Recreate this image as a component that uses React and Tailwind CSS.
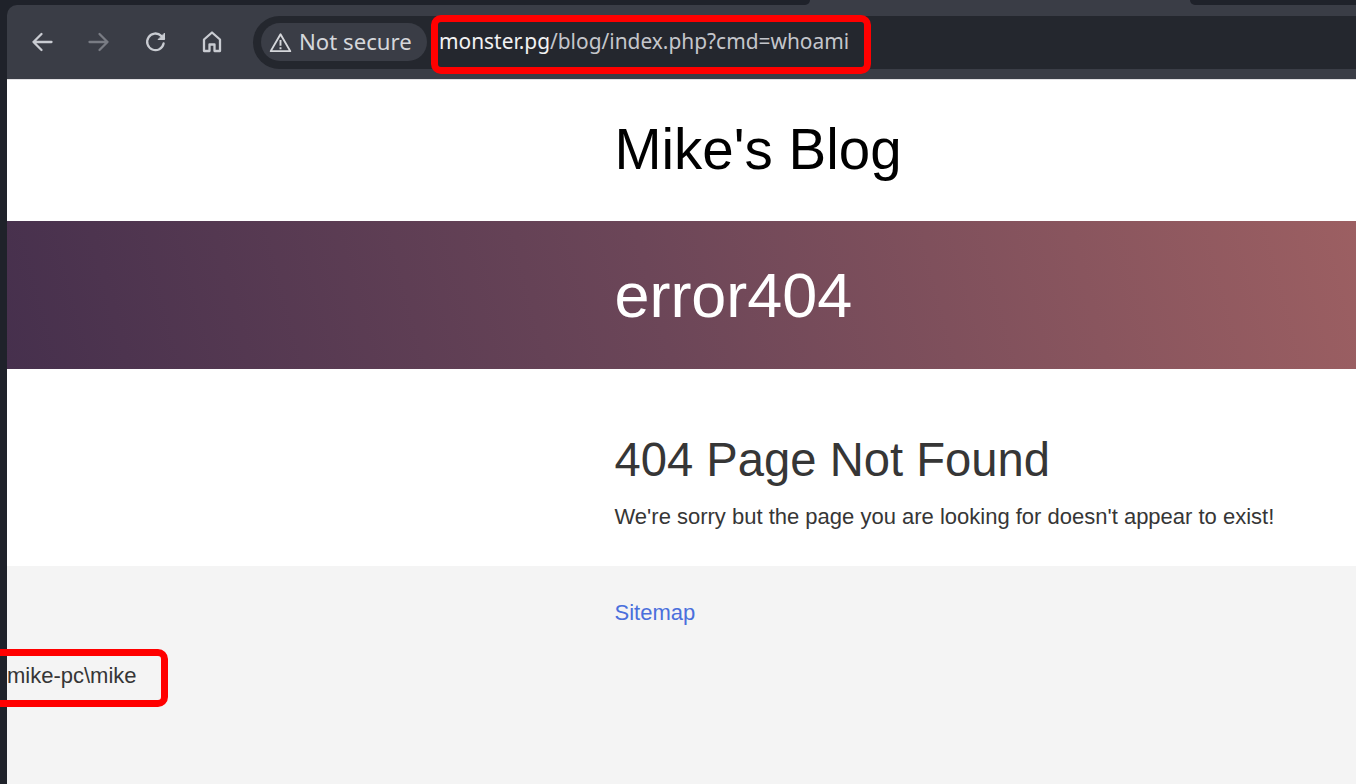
export default function App() {
  const ui = { fontFamily: '"Noto Sans", sans-serif' };
  const web = { fontFamily: '"Liberation Sans", Arial, sans-serif' };
  return (
    <div className="relative flex h-[784px] w-[1356px] overflow-hidden bg-[#1f222a]" style={web}>
      <div className="w-[7px] shrink-0" />
      <div className="flex min-w-0 flex-1 flex-col">
        {/* browser chrome */}
        <div className="h-[5px] shrink-0 bg-[#3a3d46]">
          <div className="flex h-full">
            <div className="h-full w-[803px] rounded-br-[8px] bg-[#1f222a]" />
            <div className="flex-1" />
            <div className="h-full w-[166px] rounded-bl-[8px] bg-[#1f222a]" />
          </div>
        </div>
        <div className="flex h-[74px] shrink-0 items-center rounded-tl-[10px] bg-[#3a3d46] pl-[23px]" style={ui}>
          <div className="flex w-[223px] shrink-0 items-center gap-[33px] text-[#c9ccd2]">
            <svg width="24" height="24" viewBox="0 0 24 24" fill="none" stroke="currentColor" strokeWidth="2.3" strokeLinecap="round" strokeLinejoin="round"><path d="M3.5 12h18M11.5 4 3.5 12l8 8" /></svg>
            <svg width="24" height="24" viewBox="0 0 24 24" fill="none" stroke="#797c84" strokeWidth="2.3" strokeLinecap="round" strokeLinejoin="round"><path d="M2.5 12h18M12.5 4l8 8-8 8" /></svg>
            <svg width="24" height="24" viewBox="0 0 24 24" fill="none" stroke="currentColor" strokeWidth="2.3" strokeLinecap="round" strokeLinejoin="round"><path d="M19.6 13.5A8.3 8.3 0 1 1 17.2 5.8L20 8.5" /><path d="M20.5 3.5V9.5H14.5Z" fill="currentColor" strokeWidth="1" /></svg>
            <svg width="24" height="24" viewBox="0 0 24 24" fill="none" stroke="currentColor" strokeWidth="2.3" strokeLinejoin="round"><path d="M11 2.5 3 9.5V21h5.5v-6.5h5V21H19V9.5z" /></svg>
          </div>
          <div className="flex h-[53px] min-w-0 flex-1 items-center rounded-l-[27px] bg-[#24272e] pl-[8px]">
            <div className="flex h-[38px] w-[166px] shrink-0 items-center gap-[7px] rounded-[19px] bg-[#3a3d46] pl-[8px] text-[22.2px] text-[#d5d7db]">
              <svg width="23" height="23" viewBox="0 0 24 24" fill="none" stroke="currentColor" strokeWidth="2" strokeLinejoin="round"><path d="M12 3.5 1.8 21h20.4z" /><path d="M12 9.5v6M12 17v2" /></svg>
              <span className="whitespace-nowrap leading-none">Not secure</span>
            </div>
            <div className="ml-[12px] whitespace-nowrap text-[20.9px] text-[#c4c6cb]">
              <span className="text-[#f2f2f3]">monster.pg</span>/blog/index.php?cmd=whoami
            </div>
          </div>
        </div>
        {/* page */}
        <div className="flex h-[142px] shrink-0 items-center border-t border-[#e2e2e4] bg-white pl-[607.5px]">
          <h1 className="text-[56.5px] leading-none text-black">Mike's Blog</h1>
        </div>
        <div className="flex h-[148px] shrink-0 items-center bg-[linear-gradient(75deg,#46304d,#6c4658_48%,#9c5f62)] pl-[607.5px]">
          <h2 className="text-[62.9px] leading-none text-white">error404</h2>
        </div>
        <div className="h-[197px] shrink-0 bg-white pl-[607.5px] pt-[66px] text-[#363636]">
          <h3 className="text-[47.2px] leading-[50px]">404 Page Not Found</h3>
          <p className="mt-[18px] text-[22px] leading-[28px]">We're sorry but the page you are looking for doesn't appear to exist!</p>
        </div>
        <div className="flex-1 bg-[#f4f4f4] pt-[33px] text-[22px] text-[#363636]">
          <a className="ml-[607.5px] block leading-[28px] text-[#4a6fdc]">Sitemap</a>
          <div className="mt-[35px] leading-[28px]">mike-pc\mike</div>
        </div>
      </div>
      {/* annotation boxes */}
      <div className="absolute left-[431px] top-[15px] h-[59px] w-[440px] rounded-[10px] border-[7px] border-[#ff0000]" />
      <div className="absolute left-[-10px] top-[649px] h-[58px] w-[178px] rounded-[10px] border-[7px] border-[#ff0000]" />
    </div>
  );
}
